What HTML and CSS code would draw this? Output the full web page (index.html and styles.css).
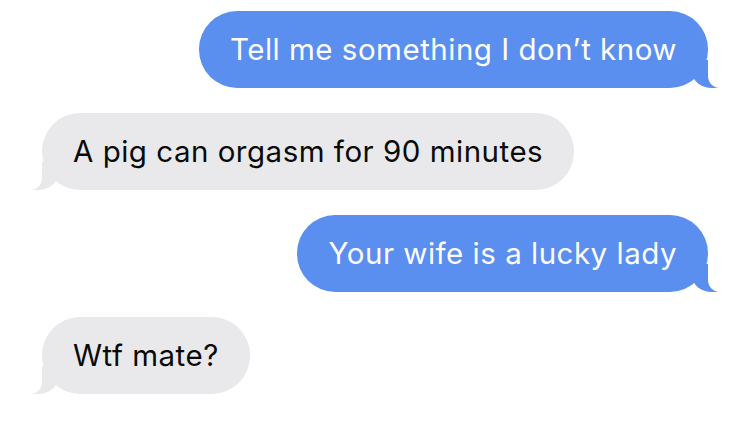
FILE: index.html
```html
<!DOCTYPE html>
<html lang="en">
<head>
    <meta charset="UTF-8">
    <title>Messages</title>
    <link rel="stylesheet" href="styles.css">
</head>
<body>
    <div class="thread">
        <div class="bubble sent">Tell me something I don’t know</div>
        <div class="bubble received">A pig can orgasm for 90 minutes</div>
        <div class="bubble sent">Your wife is a lucky lady</div>
        <div class="bubble received">Wtf mate?</div>
    </div>
</body>
</html>
```

FILE: styles.css
```css
body {
    margin: 0;
    background-color: #fff;
    font-family: Inter, 'Liberation Sans', Arial, sans-serif;
}
.thread {
    display: flex;
    flex-direction: column;
    gap: 25px;
    padding: 11px 41px 0 42px;
}
.bubble {
    position: relative;
    height: 77px;
    line-height: 77px;
    padding: 0 31px;
    border-radius: 38px;
    font-size: 29.5px;
    letter-spacing: 0.5px;
    white-space: nowrap;
}
.sent {
    align-self: flex-end;
    background-color: #5b8fef;
    color: #fdfdff;
}
.received {
    align-self: flex-start;
    background-color: #e9e9eb;
    color: #0a0a0a;
}
/* tails */
.bubble::before,
.bubble::after {
    content: "";
    position: absolute;
    bottom: 0;
    height: 28px;
}
.sent::before {
    right: -10px;
    width: 26px;
    background-color: #5b8fef;
    border-bottom-left-radius: 20px 16px;
}
.sent::after {
    right: -30px;
    width: 30px;
    background-color: #fff;
    border-bottom-left-radius: 12px;
}
.received::before {
    left: -10px;
    width: 26px;
    background-color: #e9e9eb;
    border-bottom-right-radius: 20px 16px;
}
.received::after {
    left: -30px;
    width: 30px;
    background-color: #fff;
    border-bottom-right-radius: 12px;
}
```
